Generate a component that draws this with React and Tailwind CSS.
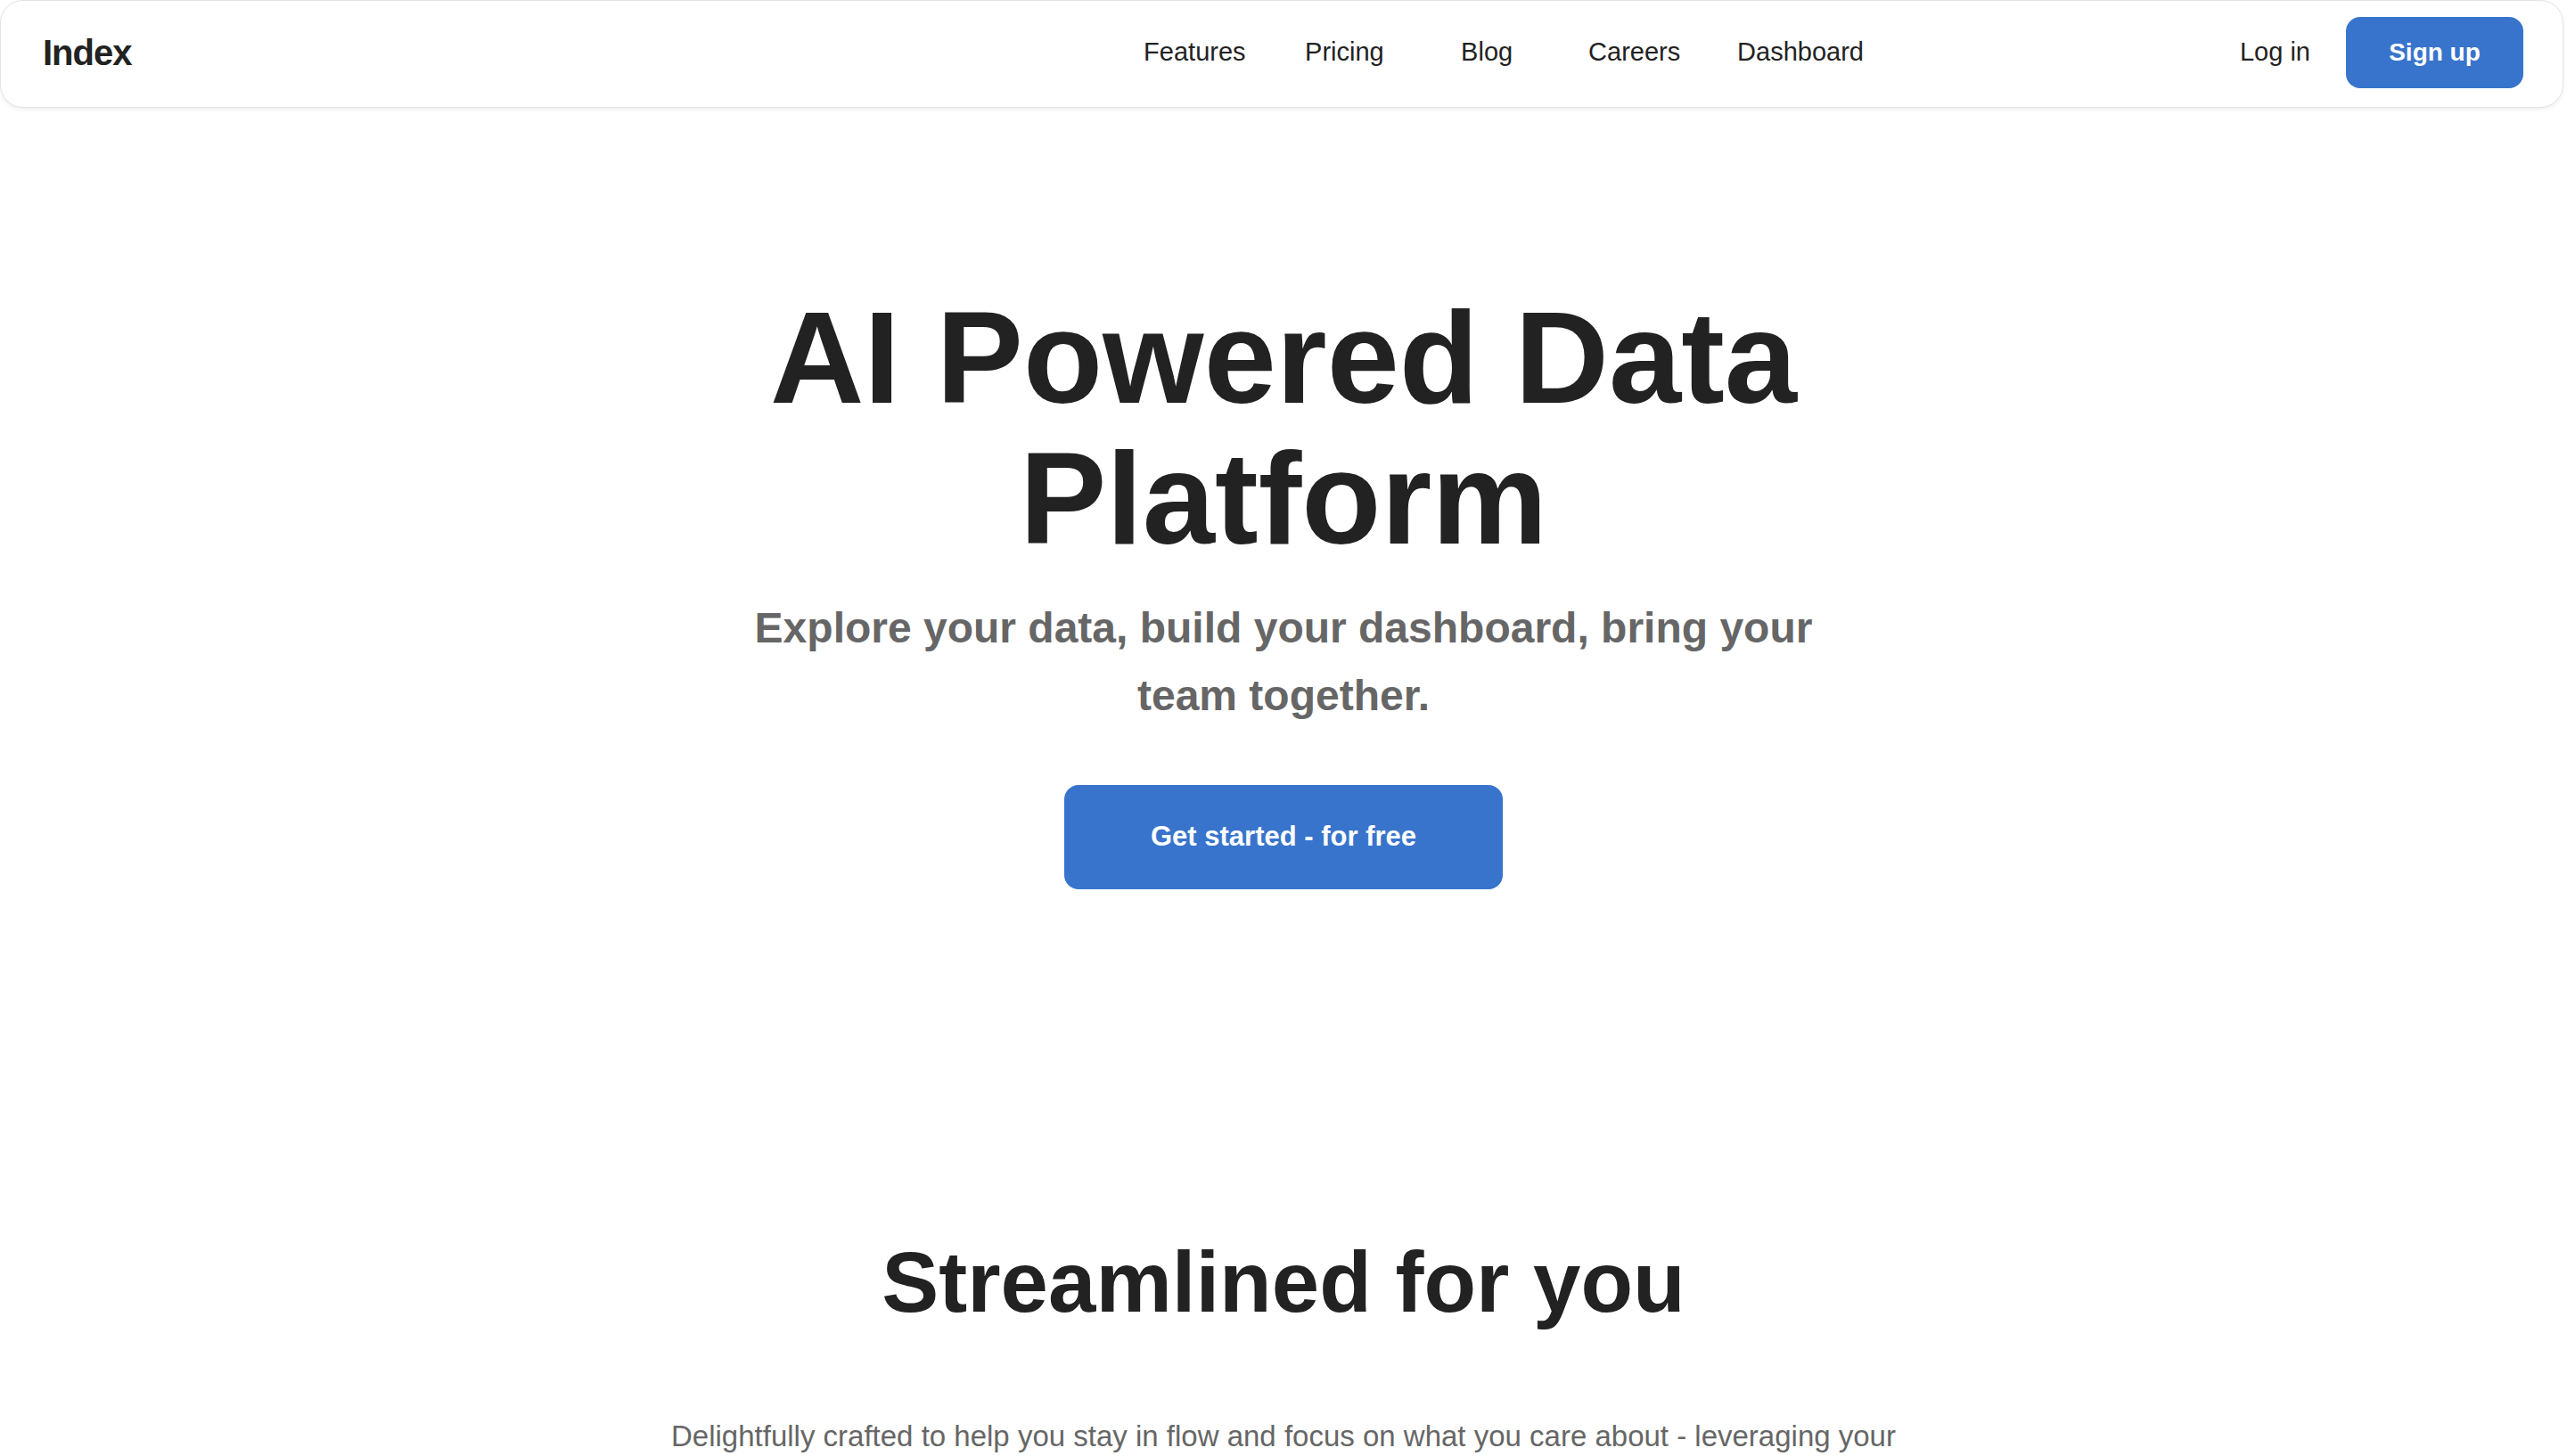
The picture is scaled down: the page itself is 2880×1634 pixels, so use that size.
import React from "react";

const links = [
  { label: "Features", w: "w-[181px]" },
  { label: "Pricing", w: "w-[175px]" },
  { label: "Blog", w: "w-[143px]" },
  { label: "Careers", w: "w-[167px]" },
  { label: "Dashboard", w: "" },
];

export default function App() {
  return (
    <div className="min-h-screen bg-white text-[#222] font-['Liberation_Sans',Arial,sans-serif] overflow-hidden">
      {/* Navbar */}
      <header className="mr-[4px] h-[121px] flex items-center pb-[4px] pl-[47px] pr-[44px] bg-white rounded-[26px] border border-[#e4e4e4] shadow-[0_2px_5px_rgba(0,0,0,0.07)]">
        <a className="text-[40px] font-bold tracking-tight">Index</a>

        <nav className="ml-auto flex items-center">
          {links.map((l) => (
            <a key={l.label} className={`${l.w} text-[29px] text-[#222]`}>
              {l.label}
            </a>
          ))}
        </nav>

        <div className="ml-[422px] flex items-center gap-[40px]">
          <a className="text-[29px] text-[#222]">Log in</a>
          <button className="w-[199px] h-[80px] flex items-center justify-center rounded-[16px] bg-[#3874cc] text-white text-[28px] font-bold">
            Sign up
          </button>
        </div>
      </header>

      {/* Hero */}
      <section className="flex flex-col items-center text-center pt-[202px]">
        <h1 className="w-[1240px] text-[146px] leading-[158px] font-bold">
          AI Powered Data Platform
        </h1>
        <p className="w-[1240px] mt-[28px] text-[48px] leading-[76px] font-bold text-[#666]">
          Explore your data, build your dashboard, bring your team together.
        </p>
        <button className="mt-[62px] w-[492px] h-[117px] rounded-[16px] bg-[#3874cc] text-white text-[31px] font-bold">
          Get started - for free
        </button>
      </section>

      {/* Streamlined */}
      <section className="flex flex-col items-center text-center pt-[383px]">
        <h2 className="text-[96px] leading-[115px] font-bold">Streamlined for you</h2>
        <p className="mt-[89px] w-[1400px] text-[33px] leading-[54px] text-[#666]">
          Delightfully crafted to help you stay in flow and focus on what you care about - leveraging your
          data and your team to build dashboards that matter.
        </p>
      </section>
    </div>
  );
}
